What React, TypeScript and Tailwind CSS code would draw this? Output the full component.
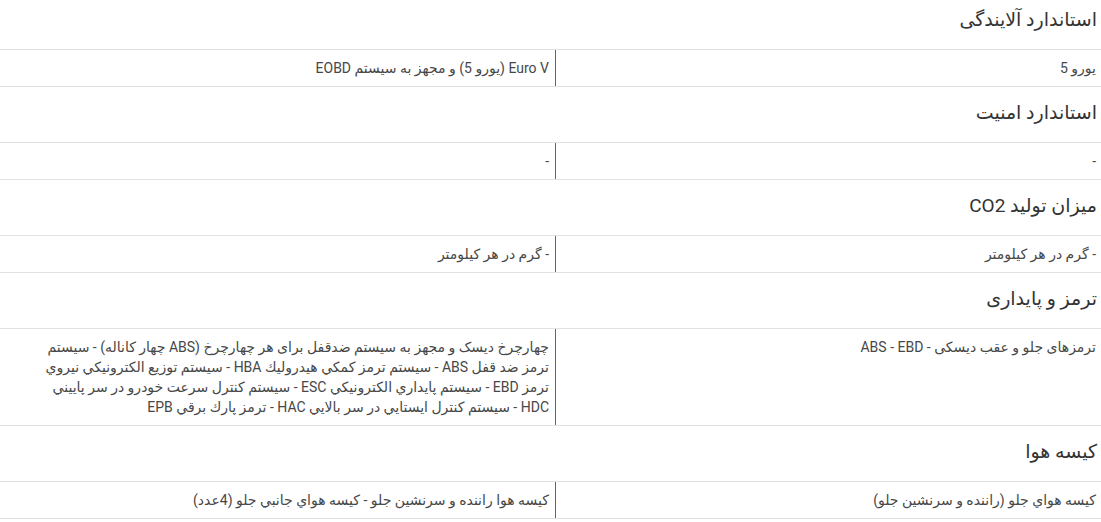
import React from "react"

type Spec = { label: string; value: string }
type Section = { title: string; rows: Spec[] }

const sections: Section[] = [
  {
    title: "استاندارد آلایندگی",
    rows: [{ label: "یورو 5", value: "Euro V (یورو 5) و مجهز به سیستم EOBD" }],
  },
  {
    title: "استاندارد امنیت",
    rows: [{ label: "-", value: "-" }],
  },
  {
    title: "میزان تولید CO2",
    rows: [{ label: "- گرم در هر کیلومتر", value: "- گرم در هر کیلومتر" }],
  },
  {
    title: "ترمز و پایداری",
    rows: [
      {
        label: "ترمزهای جلو و عقب دیسکی - ABS - EBD",
        value:
          "چهارچرخ دیسک و مجهز به سیستم ضدقفل برای هر چهارچرخ (ABS چهار کاناله) - سیستم ترمز ضد قفل ABS - سيستم ترمز كمكي هيدروليك HBA - سيستم توزيع الكترونيكي نيروي ترمز EBD - سيستم پايداري الكترونيكي ESC - سيستم كنترل سرعت خودرو در سر پاييني HDC - سيستم كنترل ايستايي در سر بالايي HAC - ترمز پارك برقي EPB",
      },
    ],
  },
  {
    title: "کیسه هوا",
    rows: [
      {
        label: "كيسه هواي جلو (راننده و سرنشين جلو)",
        value: "كيسه هوا راننده و سرنشين جلو - كيسه هواي جانبي جلو (4عدد)",
      },
    ],
  },
]

function SpecRow({ label, value }: Spec) {
  return (
    <div className="grid grid-cols-[546px_1fr] border-y border-[#e2e2e2] text-[14px] leading-5 text-[#474747]">
      <div className="border-l border-[#666] px-[5px] py-2">{label}</div>
      <div className="py-2 pl-[30px] pr-[6px]">{value}</div>
    </div>
  )
}

export default function App() {
  return (
    <div
      dir="rtl"
      className="w-[1101px] bg-white"
      style={{ fontFamily: 'Roboto, "DejaVu Sans", sans-serif' }}
    >
      {sections.map((section, i) => (
        <section key={section.title}>
          <h2
            className={`${i === 0 ? "pt-2" : "pt-[14px]"} pb-[17px] pr-[4px] text-[19px] leading-6 text-[#333]`}
          >
            {section.title}
          </h2>
          {section.rows.map((row) => (
            <SpecRow key={row.label} {...row} />
          ))}
        </section>
      ))}
    </div>
  )
}
